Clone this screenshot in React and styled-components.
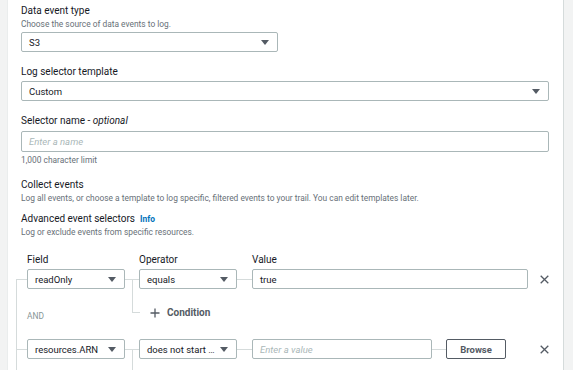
import React from "react";
import styled, { createGlobalStyle } from "styled-components";

const Global = createGlobalStyle`
  html, body { margin: 0; padding: 0; background: #fff; }
  body { font-family: Roboto, "Open Sans", Arial, sans-serif; color: #16191f; }
  * { box-sizing: border-box; }
`;

const LINE = "#d5dbdb";

const Page = styled.div`
  display: flex;
  width: 573px;
  height: 370px;
  overflow: hidden;
`;

const Rail = styled.div`
  flex: 0 0 ${(p) => p.$w}px;
  background: #f2f3f3;
  ${(p) => (p.$side === "left" ? "border-right: 1px solid #eaeded;" : "border-left: 1px solid #d5dbdb;")}
`;

const Main = styled.main`
  flex: 1;
  min-width: 0;
  padding: 4px 14px 0 13px;
  display: flex;
  flex-direction: column;
`;

const Field = styled.section`
  display: flex;
  flex-direction: column;
  margin-top: ${(p) => p.$mt || 0}px;
`;

const Label = styled.div`
  font-size: 10px;
  line-height: 14px;
  color: #16191f;
  em { font-style: italic; }
`;

const Desc = styled.div`
  font-size: 8.4px;
  line-height: 12px;
  color: #687078;
  margin-top: ${(p) => p.$mt || 0}px;
`;

const SelectBox = styled.div`
  display: flex;
  align-items: center;
  justify-content: space-between;
  width: ${(p) => (p.$w ? `${p.$w}px` : "100%")};
  height: 20px;
  margin-top: ${(p) => p.$mt || 0}px;
  padding: 0 8px 0 7px;
  border: 1px solid #aab7b8;
  border-radius: 2px;
  font-size: 9.5px;
  color: #16191f;
  background: #fff;
  white-space: nowrap;
  overflow: hidden;
`;

const Caret = styled.span`
  width: 0;
  height: 0;
  border-left: 4px solid transparent;
  border-right: 4px solid transparent;
  border-top: 5px solid #545b64;
  flex: 0 0 auto;
  margin-left: 4px;
`;

const TextBox = styled.div`
  display: flex;
  align-items: center;
  height: ${(p) => p.$h || 20}px;
  margin-top: ${(p) => p.$mt || 0}px;
  padding: 0 7px;
  border: 1px solid #aab7b8;
  border-radius: 2px;
  font-size: 9.5px;
  color: ${(p) => (p.$placeholder ? "#aab7b8" : "#16191f")};
  font-style: ${(p) => (p.$placeholder ? "italic" : "normal")};
  flex: ${(p) => (p.$grow ? "1 1 0" : "none")};
  min-width: 0;
`;

const InfoLink = styled.a`
  margin-left: 5px;
  font-size: 8.4px;
  font-weight: 700;
  color: #0073bb;
  text-decoration: none;
`;

const Rules = styled.div`
  display: flex;
  flex-direction: column;
  margin: 15px 0 0 -5px;
`;

const Grid = styled.div`
  display: grid;
  grid-template-columns: 11px 98px 14px 98px 15px 1fr 21px;
  align-items: center;
`;

const HeaderCell = styled.div`
  grid-column: ${(p) => p.$col};
  font-size: 10px;
  line-height: 14px;
  padding-bottom: 2px;
`;

const Tree = styled.div`
  position: relative;
  display: flex;
  flex-direction: column;
  &::before {
    content: "";
    position: absolute;
    left: 0;
    top: 10px;
    bottom: 0;
    width: 1px;
    background: ${LINE};
  }
`;

const Connector = styled.span`
  height: 1px;
  background: ${LINE};
  align-self: center;
  width: ${(p) => (p.$w ? `${p.$w}px` : "100%")};
  flex: 0 0 auto;
`;

const ValueCell = styled.div`
  display: flex;
  align-items: center;
  min-width: 0;
  padding-right: ${(p) => p.$pr || 0}px;
`;

const Remove = styled.button`
  display: flex;
  align-items: center;
  justify-content: flex-end;
  height: 20px;
  padding: 0;
  border: 0;
  background: none;
  color: #545b64;
`;

const Browse = styled.button`
  flex: 0 0 60px;
  height: 20px;
  border: 1px solid #545b64;
  border-radius: 2px;
  background: #fff;
  color: #545b64;
  font-family: inherit;
  font-size: 9.5px;
  font-weight: 700;
  padding: 0;
`;

const Between = styled.div`
  display: flex;
  align-items: flex-start;
  height: 50px;
  padding-left: 11px;
`;

const AndLabel = styled.div`
  width: 105px;
  margin-top: 21px;
  font-size: 8.4px;
  line-height: 12px;
  color: #879596;
`;

const Elbow = styled.span`
  width: 8px;
  height: ${(p) => (p.$open ? 60 : 34)}px;
  margin-top: -10px;
  border-left: 1px solid ${LINE};
  border-bottom: ${(p) => (p.$open ? "none" : `1px solid ${LINE}`)};
  flex: 0 0 auto;
`;

const AddCondition = styled.button`
  display: flex;
  align-items: center;
  gap: 7px;
  margin: 17px 0 0 10px;
  padding: 0;
  border: 0;
  background: none;
  font-family: inherit;
  font-size: 10px;
  font-weight: 700;
  color: #545b64;
  line-height: 14px;
`;

const Plus = () => (
  <svg width="10" height="10" viewBox="0 0 10 10">
    <path d="M5 0.5v9M0.5 5h9" stroke="#545b64" strokeWidth="1.3" fill="none" />
  </svg>
);

const XIcon = () => (
  <svg width="9" height="9" viewBox="0 0 9 9">
    <path d="M0.7 0.7l7.6 7.6M8.3 0.7L0.7 8.3" stroke="#545b64" strokeWidth="1.3" fill="none" />
  </svg>
);

const Rule = ({ field, op, children }) => (
  <Grid>
    <Connector />
    <SelectBox>
      <span>{field}</span>
      <Caret />
    </SelectBox>
    <Connector />
    <SelectBox>
      <span>{op}</span>
      <Caret />
    </SelectBox>
    <Connector />
    {children}
    <Remove aria-label="Remove">
      <XIcon />
    </Remove>
  </Grid>
);

const Branch = ({ and, last }) => (
  <Between>
    <AndLabel>{and ? "AND" : ""}</AndLabel>
    <Elbow $open={last} />
    {!last && (
      <AddCondition>
        <Plus />
        Condition
      </AddCondition>
    )}
  </Between>
);

export default function App() {
  return (
    <>
      <Global />
      <Page>
        <Rail $w={8} $side="left" />
        <Main>
          <Field>
            <Label>Data event type</Label>
            <Desc>Choose the source of data events to log.</Desc>
            <SelectBox $w={257} $mt={2}>
              <span>S3</span>
              <Caret />
            </SelectBox>
          </Field>

          <Field $mt={13}>
            <Label>Log selector template</Label>
            <SelectBox $mt={2}>
              <span>Custom</span>
              <Caret />
            </SelectBox>
          </Field>

          <Field $mt={13}>
            <Label>
              Selector name - <em>optional</em>
            </Label>
            <TextBox $placeholder $mt={3} $h={21}>
              Enter a name
            </TextBox>
            <Desc $mt={2}>1,000 character limit</Desc>
          </Field>

          <Field $mt={12}>
            <Label>Collect events</Label>
            <Desc>
              Log all events, or choose a template to log specific, filtered events to your trail. You can edit
              templates later.
            </Desc>
          </Field>

          <Field $mt={8}>
            <Label>
              Advanced event selectors
              <InfoLink href="#">Info</InfoLink>
            </Label>
            <Desc>Log or exclude events from specific resources.</Desc>
          </Field>

          <Rules>
            <Grid>
              <HeaderCell $col={2}>Field</HeaderCell>
              <HeaderCell $col={4}>Operator</HeaderCell>
              <HeaderCell $col={6}>Value</HeaderCell>
            </Grid>
            <Tree>
              <Rule field="readOnly" op="equals">
                <ValueCell>
                  <TextBox $grow>true</TextBox>
                </ValueCell>
              </Rule>
              <Branch and />
              <Rule field="resources.ARN" op="does not start …">
                <ValueCell $pr={22}>
                  <TextBox $grow $placeholder>Enter a value</TextBox>
                  <Connector $w={14} />
                  <Browse>Browse</Browse>
                </ValueCell>
              </Rule>
              <Branch last />
            </Tree>
          </Rules>
        </Main>
        <Rail $w={10} $side="right" />
      </Page>
    </>
  );
}
